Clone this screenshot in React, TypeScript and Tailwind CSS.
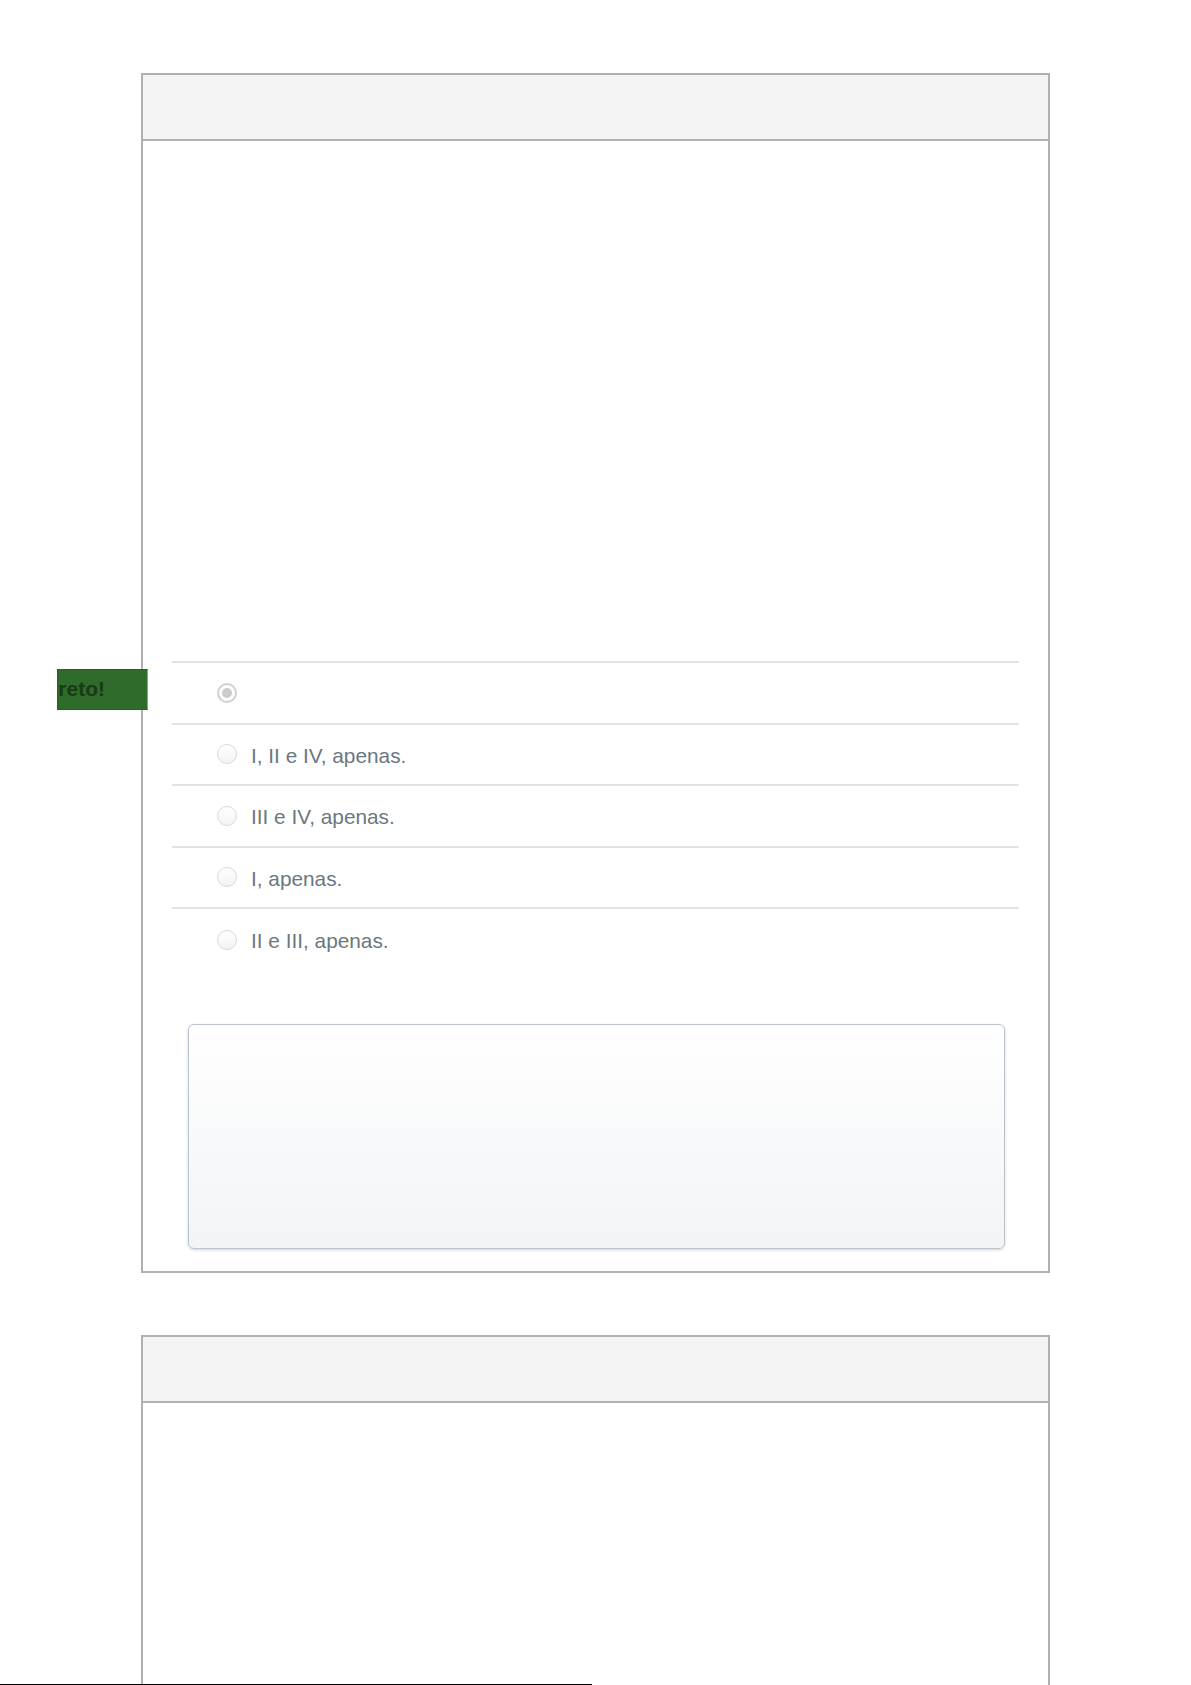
import React from "react";

const options = ["", "I, II e IV, apenas.", "III e IV, apenas.", "I, apenas.", "II e III, apenas."];

const Radio = ({ checked }: { checked?: boolean }) =>
  checked ? (
    <span className="flex h-5 w-5 shrink-0 items-center justify-center rounded-full border-2 border-[#d0d0d0] bg-white">
      <span className="h-[10px] w-[10px] rounded-full bg-[#cbcbcb]" />
    </span>
  ) : (
    <span className="h-5 w-5 shrink-0 rounded-full border border-[#d9d9d9] bg-gradient-to-b from-white to-[#f3f3f3]" />
  );

const CardHeader = () => (
  <div className="h-[66px] border-b-2 border-[#b0b0b0] bg-[#f4f4f4]" />
);

export default function App() {
  return (
    <div className="min-h-[1685px] bg-white pt-[73px] font-['Liberation_Sans',Arial,sans-serif]">
      <div className="relative mx-auto w-[909px] border-2 border-[#b0b0b0] bg-white">
        <CardHeader />
        <div className="px-[29px] pb-[22px] pt-[520px]">
          <ul className="border-t-2 border-[#e2e2e2]">
            {options.map((text, i) => (
              <li
                key={i}
                className={`relative flex h-[61.5px] items-center gap-[14px] pl-[45px] ${
                  i < options.length - 1 ? "border-b-2 border-[#e2e2e2]" : ""
                }`}
              >
                {i === 0 && (
                  <div className="absolute left-[-115px] top-[6px] flex h-[41px] w-[91px] justify-end overflow-hidden border border-[#2a5e26] border-r-[#7fae79] bg-[#2f6b2b] pr-[42px] pt-[8px]">
                    <span className="whitespace-nowrap text-[21px] font-bold leading-[22px] text-[#183a15]">
                      Correto!
                    </span>
                  </div>
                )}
                <Radio checked={i === 0} />
                <span className="pt-[3px] text-[20.8px] leading-6 text-[#6b7781]">{text}</span>
              </li>
            ))}
          </ul>
          <div className="mx-[16px] mr-[14px] mt-[53px] h-[225px] rounded-[6px] border border-[#bcc5cd] bg-gradient-to-b from-white to-[#f2f4f6] shadow-[0_1px_3px_rgba(0,0,0,0.18)]" />
        </div>
      </div>

      <div className="mx-auto mt-[62px] w-[909px] border-2 border-b-0 border-[#b0b0b0] bg-white">
        <CardHeader />
        <div className="h-[420px]" />
      </div>

      <div className="fixed bottom-0 left-0 h-px w-[592px] bg-black" />
    </div>
  );
}
